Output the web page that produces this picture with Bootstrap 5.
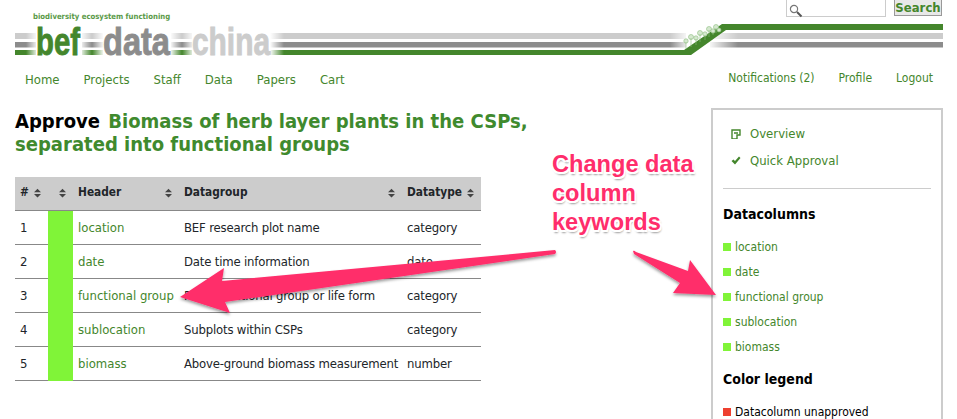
<!DOCTYPE html>
<html lang="en">
<head>
<meta charset="utf-8">
<title>BEF Data China</title>
<link href="https://cdn.jsdelivr.net/npm/bootstrap@5.3.0/dist/css/bootstrap.min.css" rel="stylesheet">
<style>
html,body{height:419px;overflow:hidden;background:#fff}
body{font-family:"DejaVu Sans Condensed","DejaVu Sans",sans-serif;font-stretch:condensed;font-size:13px;color:#000;width:957px;position:relative}
a{color:#44862c;text-decoration:none}
.top-row{height:18px;padding:0 15px 0 33px}
.tagline{font-size:7.7px;font-weight:700;color:#5a9a48;margin-top:11px;line-height:12px;font-stretch:condensed}
.search-box{width:100px;height:18px;border:1px solid #ccc;background:#fff;margin-top:-1px;margin-right:8px;padding:0 0 0 2px}
.search-btn{height:17px;width:48px;margin-top:-1px;padding:0;border:1px solid #999;background:#e8e8e8;color:#44862c;font-weight:700;font-size:13px;line-height:14px;border-radius:0;font-family:inherit}
.banner{display:block;width:957px;height:40px;overflow:visible}
.logo-text{font-family:"Liberation Sans",sans-serif;font-weight:700;font-size:38px;stroke-width:.9}
.main-nav{padding:0 24px 0 25px;margin-top:13px;height:16px;line-height:16px}
.left-links{gap:24px;padding-top:1px}
.right-links{gap:24px;margin-top:-1px;font-size:12px}
.page-body{padding:0 14px 0 15px;margin-top:14px}
.left-col{width:466px;flex:none}
.page-head{font-size:20.05px;font-weight:700;line-height:23px;margin:9px 0 21px;width:540px;font-family:inherit}
.page-head a{color:#3f8a2e;margin-left:2px}
.data-tbl{width:466px;margin:0;table-layout:fixed;--bs-table-bg:transparent}
.data-tbl th{background:#ccc;height:33px;font-weight:700;font-size:11.8px;padding:0 7px 0 5px;vertical-align:middle;border-bottom:1px solid #888;white-space:nowrap}
.data-tbl td{height:34px;padding:1px 5px 0;vertical-align:middle;border-bottom:1px solid #888;white-space:nowrap;font-size:13px;letter-spacing:-.18px}
.data-tbl td a{letter-spacing:0}
.data-tbl td.swatch-cell{background:#80f438;border-bottom-color:#80f438}
.sort-head{display:flex;justify-content:space-between;align-items:center}
.sort-ic{width:7px;height:10px;flex:none}
.side-panel{width:232px;height:312px;overflow:hidden;border:2px solid #ccc;border-bottom:0;margin-left:auto;padding:10px 10px 0 10px;margin-top:7px}
.side-link{display:flex;align-items:center;gap:9px;padding-left:8px;height:27px;font-size:13px}
.side-rule{border:0;border-top:1px solid #ccc;opacity:1;margin:14px 0 17px}
.side-title{font-size:14px;font-weight:700;margin:0 0 12px;line-height:16px;font-family:inherit}
.col-list{list-style:none;padding:0;margin:0 0 12px}
.col-list li{display:flex;align-items:center;gap:4px;height:25px;font-size:12px}
.dot{width:8px;height:8px;flex:none;background:#80f438}
.dot-red{background:#ee4030}
.overlay{position:absolute;left:0;top:0;width:957px;height:419px;pointer-events:none}
.callout{position:absolute;left:552px;top:150px;font-family:"Liberation Sans",sans-serif;font-weight:700;font-size:23.6px;line-height:29px;color:#ff2d6b;text-shadow:-1.5px -1.5px 0 #fff,1.5px -1.5px 0 #fff,-1.5px 1.5px 0 #fff,1.5px 1.5px 0 #fff,1px 3px 2px rgba(0,0,0,.4)}
</style>
</head>
<body>
<header>
  <div class="top-row d-flex justify-content-between">
    <div class="tagline">biodiversity ecosystem functioning</div>
    <form class="d-flex">
      <div class="search-box">
        <svg width="14" height="14" viewBox="0 0 14 14"><circle cx="5" cy="5" r="3.6" fill="#fff" stroke="#777" stroke-width="1.2"/><path d="M8 8l4.5 4.5" stroke="#555" stroke-width="2"/></svg>
      </div>
      <button type="button" class="btn search-btn">Search</button>
    </form>
  </div>
  <svg class="banner" viewBox="0 18 957 40">
    <defs>
      <linearGradient id="f1" x1="0" x2="1"><stop offset="0" stop-color="#fff" stop-opacity="0"/><stop offset="1" stop-color="#fff"/></linearGradient>
      <linearGradient id="f2" x1="0" x2="1"><stop offset="0" stop-color="#fff"/><stop offset="1" stop-color="#fff" stop-opacity="0"/></linearGradient>
    </defs>
    <rect x="15" y="33" width="928" height="6" fill="#ccc"/>
    <rect x="15" y="42" width="928" height="5.5" fill="#8c8c8c"/>
    <rect x="15" y="50" width="676" height="5" fill="#44862c"/>
    <rect x="26" y="32" width="12" height="24" fill="url(#f1)"/>
    <rect x="36" y="32" width="46" height="24" fill="#fff"/>
    <rect x="80" y="32" width="12" height="24" fill="url(#f2)"/>
    <rect x="92" y="32" width="12" height="24" fill="url(#f1)"/>
    <rect x="103" y="32" width="68" height="24" fill="#fff"/>
    <rect x="170" y="32" width="12" height="24" fill="url(#f2)"/>
    <rect x="182" y="32" width="12" height="24" fill="url(#f1)"/>
    <rect x="192" y="32" width="78" height="24" fill="#fff"/>
    <rect x="270" y="32" width="14" height="24" fill="url(#f2)"/>
    <rect x="670" y="32" width="20" height="17" fill="url(#f1)"/>
    <rect x="686" y="32" width="24" height="17" fill="#fff"/>
    <rect x="708" y="32" width="30" height="17" fill="url(#f2)"/>
    <path d="M943 24H722L684 50V55H691L726 30H943Z" fill="#44862c"/>
    <g fill="#d5e8cf" stroke="#8dbd7f" stroke-width=".6">
      <circle cx="686" cy="41" r="2.2"/><circle cx="691" cy="37" r="2.5"/><circle cx="696" cy="38" r="2.2"/><circle cx="700" cy="33" r="2.5"/><circle cx="705" cy="34" r="2.2"/><circle cx="709" cy="29" r="2.5"/><circle cx="713" cy="31" r="2.2"/><circle cx="716" cy="27" r="2.5"/><circle cx="719" cy="30" r="2"/>
      <path d="M686 42v7M691 38v9M696 39v6M700 34v8M705 35v5M709 30v7M713 32v3M716 28v5" fill="none"/>
    </g>
    <text class="logo-text" x="36" y="54.5" fill="#44862c" stroke="#44862c" textLength="44" lengthAdjust="spacingAndGlyphs">bef</text>
    <text class="logo-text" x="103" y="54.5" fill="#8c8c8c" stroke="#8c8c8c" textLength="67" lengthAdjust="spacingAndGlyphs">data</text>
    <text class="logo-text" x="192" y="54.5" fill="#ccc" stroke="#ccc" textLength="78" lengthAdjust="spacingAndGlyphs">china</text>
  </svg>
  <nav class="main-nav d-flex justify-content-between">
    <div class="left-links d-flex"><a href="#">Home</a><a href="#">Projects</a><a href="#">Staff</a><a href="#">Data</a><a href="#">Papers</a><a href="#">Cart</a></div>
    <div class="right-links d-flex"><a href="#">Notifications (2)</a><a href="#">Profile</a><a href="#">Logout</a></div>
  </nav>
</header>
<main class="page-body d-flex">
  <div class="left-col">
    <h1 class="page-head">Approve <a href="#">Biomass of herb layer plants in the CSPs, separated into functional groups</a></h1>
    <table class="table data-tbl">
      <colgroup><col style="width:33px"><col style="width:25px"><col style="width:106px"><col style="width:223px"><col style="width:79px"></colgroup>
      <thead><tr>
        <th><span class="sort-head">#<svg class="sort-ic" viewBox="0 0 8 10"><path d="M4 0l4 4H0zM4 10L0 6h8z" fill="#444"/></svg></span></th>
        <th><span class="sort-head justify-content-end"><svg class="sort-ic" viewBox="0 0 8 10"><path d="M4 0l4 4H0zM4 10L0 6h8z" fill="#444"/></svg></span></th>
        <th><span class="sort-head">Header<svg class="sort-ic" viewBox="0 0 8 10"><path d="M4 0l4 4H0zM4 10L0 6h8z" fill="#444"/></svg></span></th>
        <th><span class="sort-head">Datagroup<svg class="sort-ic" viewBox="0 0 8 10"><path d="M4 0l4 4H0zM4 10L0 6h8z" fill="#444"/></svg></span></th>
        <th><span class="sort-head">Datatype<svg class="sort-ic" viewBox="0 0 8 10"><path d="M4 0l4 4H0zM4 10L0 6h8z" fill="#444"/></svg></span></th>
      </tr></thead>
      <tbody>
        <tr><td>1</td><td class="swatch-cell"></td><td><a href="#">location</a></td><td>BEF research plot name</td><td>category</td></tr>
        <tr><td>2</td><td class="swatch-cell"></td><td><a href="#">date</a></td><td>Date time information</td><td>date</td></tr>
        <tr><td>3</td><td class="swatch-cell"></td><td><a href="#">functional group</a></td><td>Plant functional group or life form</td><td>category</td></tr>
        <tr><td>4</td><td class="swatch-cell"></td><td><a href="#">sublocation</a></td><td>Subplots within CSPs</td><td>category</td></tr>
        <tr><td>5</td><td class="swatch-cell"></td><td><a href="#">biomass</a></td><td>Above-ground biomass measurement</td><td>number</td></tr>
      </tbody>
    </table>
  </div>
  <aside class="side-panel">
    <a class="side-link" href="#"><svg width="10" height="10" viewBox="0 0 10 10"><path d="M1 10V1h8v5H6v4H1M3 4h4" fill="none" stroke="#44862c" stroke-width="1.4"/></svg>Overview</a>
    <a class="side-link" href="#"><svg width="10" height="9" viewBox="0 0 10 9"><path d="M.5 5l2-1.5L4 5l4-4.5 1.5 1.5L4 8.5z" fill="#44862c"/></svg>Quick Approval</a>
    <hr class="side-rule">
    <h2 class="side-title">Datacolumns</h2>
    <ul class="col-list">
      <li><span class="dot"></span><a href="#">location</a></li>
      <li><span class="dot"></span><a href="#">date</a></li>
      <li><span class="dot"></span><a href="#">functional group</a></li>
      <li><span class="dot"></span><a href="#">sublocation</a></li>
      <li><span class="dot"></span><a href="#">biomass</a></li>
    </ul>
    <h2 class="side-title">Color legend</h2>
    <ul class="col-list"><li><span class="dot dot-red"></span>Datacolumn unapproved</li></ul>
  </aside>
</main>
<svg class="overlay" viewBox="0 0 957 419">
  <defs><filter id="sh" x="-10%" y="-30%" width="120%" height="160%"><feDropShadow dx="0" dy="2" stdDeviation="1.5" flood-color="#000" flood-opacity=".4"/></filter></defs>
  <path filter="url(#sh)" fill="#ff2d6b" d="M555 250Q557 252 555 254L225 302L230 313L180 297L224 268L222 281Z"/>
  <path filter="url(#sh)" fill="#ff2d6b" d="M633 251Q634 250 636 252L688 271L690 260L716 295L673 293L680 283L634 254Z"/>
</svg>
<div class="callout">Change data<br>column<br>keywords</div>
</body>
</html>
